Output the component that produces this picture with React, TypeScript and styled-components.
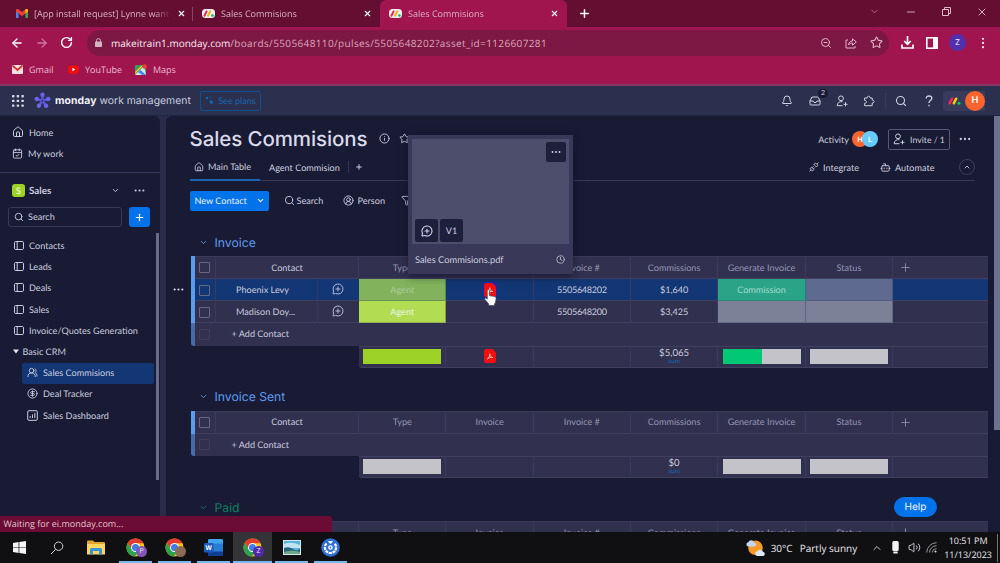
import React from 'react'
import styled, {createGlobalStyle, css} from 'styled-components'
import {
    ArrowLeft, ArrowRight, Bell, Bot, CalendarCheck, ChevronDown, ChevronUp, CircleDollarSign, CircleUserRound, Clock,
    Filter, House, Inbox, Info, MessageCirclePlus, Minus, Plus, RotateCw, Search, Star, Unplug, UsersRound, Volume2, X, ZoomOut,
} from 'lucide-react'

const theme = {
    page: '#191b34',
    gap: '#2b2c4a',
    topBar: '#2a304e',
    table: '#31304f',
    line: '#3f3f60',
    text: '#cacbde',
    muted: '#9495b3',
    blue: '#0073ea',
    group: '#5c9cf0',
    selected: '#133774',
    ui: '"Lato", "Liberation Sans", sans-serif',
    display: '"Inter", "Liberation Sans", sans-serif',
    chrome: '"Open Sans", "Liberation Sans", sans-serif',
}

/* ---------- icons ---------- */

const Dots = ({size = 12, vertical = false}: { size?: number, vertical?: boolean }) => (
    <svg width={size} height={size} viewBox="0 0 12 12" fill="currentColor">
        {[1.8, 6, 10.2].map(p => <circle key={p} cx={vertical ? 6 : p} cy={vertical ? p : 6} r="1.15"/>)}
    </svg>
)

const GmailIcon = () => (
    <svg width="12" height="9" viewBox="0 0 12 9">
        <path d="M0 1.5V9h2.6V3.4z" fill="#4285f4"/>
        <path d="M12 1.5V9H9.4V3.4z" fill="#34a853"/>
        <path d="M0 1.4C0 0 1.5-.4 2.6.5L6 3.1 9.4.5C10.5-.4 12 0 12 1.4V2.6L6 7 0 2.6z" fill="#ea4335"/>
        <path d="M9.4.5C10.5-.4 12 0 12 1.4V2.6L9.4 4.5z" fill="#fbbc04"/>
    </svg>
)

const MondayFavicon = () => (
    <svg width="13" height="9" viewBox="0 0 13 9">
        <rect width="13" height="9" rx="3.5" fill="#f6eef0"/>
        <path d="M2.4 6.7L4.6 2.4" stroke="#e2284f" strokeWidth="2" strokeLinecap="round"/>
        <path d="M6 6.7L8.2 2.4" stroke="#f5b800" strokeWidth="2" strokeLinecap="round"/>
        <circle cx="10.4" cy="6.5" r="1.3" fill="#00ba5f"/>
    </svg>
)

const MondayMark = () => (
    <svg width="13" height="8" viewBox="0 0 13 8" strokeWidth="2.5" strokeLinecap="round">
        <path d="M1.6 6.3L4 1.7" stroke="#fb275d"/>
        <path d="M5.8 6.3L8.2 1.7" stroke="#ffcc00"/>
        <circle cx="11" cy="6.2" r="1.5" fill="#00ca72"/>
    </svg>
)

const WorkLogo = () => (
    <svg width="17" height="17" viewBox="0 0 17 17">
        {[0, 72, 144, 216, 288].map(a => (
            <g key={a} transform={`rotate(${a} 8.5 8.8)`}>
                <path d="M8.5 8.8V3" stroke="#5b55d6" strokeWidth="2.4"/>
                <circle cx="8.5" cy="2.7" r="2.2" fill="#6a63f2"/>
            </g>
        ))}
        <circle cx="8.5" cy="8.8" r=".9" fill="#2a304e"/>
    </svg>
)

const AppGrid = () => (
    <svg width="12" height="12" viewBox="0 0 12 12" fill="#d8d9e8">
        {[0, 4.7, 9.4].map(y => [0, 4.7, 9.4].map(x => (
            <rect key={`${x}-${y}`} x={x} y={y} width="2.4" height="2.4" rx=".6"/>
        )))}
    </svg>
)

const BoardIcon = () => (
    <svg width="10" height="9" viewBox="0 0 10 9" fill="none" stroke="currentColor" strokeWidth="1">
        <rect x=".5" y=".5" width="9" height="8" rx="1.2"/>
        <path d="M3.2.5v8"/>
    </svg>
)

const DashboardIcon = () => (
    <svg width="11" height="11" viewBox="0 0 11 11" fill="none" stroke="currentColor" strokeWidth="1">
        <rect x=".7" y=".7" width="9.6" height="9.6" rx="1.2"/>
        <path d="M3.2 8V6M5.5 8V4.5M7.8 8V3"/>
    </svg>
)

const PersonAdd = ({size = 12}: { size?: number }) => (
    <svg width={size} height={size} viewBox="0 0 12 12" fill="none" stroke="currentColor" strokeWidth="1">
        <circle cx="5" cy="3.3" r="2.4"/>
        <path d="M6.5 6.7C3.5 6.2 1.2 7.6 1.2 10.7H6.5M9.5 7.3v4M7.5 9.3h4"/>
    </svg>
)

const PuzzleIcon = () => (
    <svg width="12" height="12" viewBox="0 0 12 12" fill="none" stroke="currentColor" strokeWidth="1" strokeLinejoin="round">
        <path d="M1.6 3H4.2C3.9.6 7.3.6 7 3H9.2V5C11.700 4.700 11.700 8.300 9.200 8V10.700H1.600V8.300C4 8.600 4 5.100 1.600 5.400z"/>
    </svg>
)

const PdfIcon = () => (
    <svg width="12" height="14" viewBox="0 0 12 14">
        <path d="M2 0H8.5L12 3.5V12a2 2 0 0 1-2 2H2a2 2 0 0 1-2-2V2a2 2 0 0 1 2-2z" fill="#f40f0f"/>
        <path d="M3.3 10C5 9 6 6.5 5.8 4.7C6 7.5 7.5 8.6 9 8.5C7 8.2 4.8 8.7 3.3 10z" fill="none" stroke="#ffd5d5" strokeWidth=".8"/>
    </svg>
)

const HandCursor = () => (
    <svg width="13" height="17" viewBox="0 0 13 17">
        <path d="M3.3 1.6c0-1.4 2-1.4 2 0v5l5.4 1c1 .3 1.5.9 1.4 1.9l-.7 4.2-.9 1.2V16.400H4.700v-1.500L1 10.600C.2 9.300 1.600 8.500 2.500 9.400l.8.8z" fill="#fff" stroke="#343444" strokeWidth=".6"/>
    </svg>
)

const ChromeIcon = () => (
    <svg width="19" height="19" viewBox="0 0 20 20">
        <circle cx="10" cy="10" r="9.5" fill="#fbc116"/>
        <path d="M1.8 5.2A9.5 9.5 0 0 1 18.3 5.5L10 5.5 6 12z" fill="#e53a2f"/>
        <path d="M1.8 5.2A9.5 9.5 0 0 0 9.5 19.5L14 12H6z" fill="#2ba24c"/>
        <circle cx="10" cy="10" r="4.7" fill="#fff"/>
        <circle cx="10" cy="10" r="3.7" fill="#3c7de6"/>
    </svg>
)

const WindowsIcon = () => (
    <svg width="13" height="13" viewBox="0 0 13 13" fill="#f4f4f4">
        <path d="M0 1.9L5.6 1.1V6.2H0zM6.3 1L13 0V6.2H6.3zM0 6.8H5.6V11.9L0 11.1zM6.3 6.8H13V13L6.3 12z"/>
    </svg>
)

const TaskSearchIcon = () => (
    <svg width="14" height="14" viewBox="0 0 14 14" fill="none" stroke="#d2d2d2" strokeWidth="1">
        <circle cx="8.6" cy="5.2" r="4.2"/>
        <path d="M5.6 8.3L1 13"/>
    </svg>
)

const FolderIcon = () => (
    <svg width="18" height="15" viewBox="0 0 18 15">
        <path d="M0 1.5Q0 .5 1 .5H6L7.5 2H17Q18 2 18 3V14H0z" fill="#dfa52c"/>
        <path d="M0 4H18V14.5H0z" fill="#fbd462"/>
        <path d="M3 14.5V9.5Q3 8 4.5 8H13.5Q15 8 15 9.5V14.5H12V11H6V14.5z" fill="#3a96d3"/>
    </svg>
)

const WordIcon = () => (
    <svg width="19" height="17" viewBox="0 0 19 17">
        <rect x="4" width="15" height="17" rx="1.5" fill="#2b7cd3"/>
        <path d="M4 1.5Q4 0 5.5 0H17.5Q19 0 19 1.5V4.5H4z" fill="#41a5ee"/>
        <path d="M4 12.5H19V15.5Q19 17 17.5 17H5.5Q4 17 4 15.5z" fill="#103f91"/>
        <rect y="4" width="9.5" height="9.5" rx="1" fill="#185abd"/>
        <text x="4.7" y="11.2" fontFamily="Open Sans" fontWeight="700" fontSize="6.5" fill="#fff" textAnchor="middle">W</text>
    </svg>
)

const PhotoIcon = () => (
    <svg width="18" height="15" viewBox="0 0 18 15">
        <rect width="18" height="15" fill="#d6e7ee"/>
        <rect x="1" y="1" width="16" height="13" fill="#57b3dc"/>
        <path d="M1 4Q8 1 17 5V8H1z" fill="#bfe3f2"/>
        <path d="M1 8Q6 6 10 9T17 8.5V14H1z" fill="#25647a"/>
        <path d="M1 12Q9 9 17 12V14H1z" fill="#6fa889"/>
    </svg>
)

const WheelIcon = () => (
    <svg width="19" height="19" viewBox="0 0 19 19">
        <circle cx="9.5" cy="9.5" r="9.3" fill="#2f6fdc"/>
        <path d="M5.500 5.500A5.600 5.600 0 1 0 13.500 5.500" fill="none" stroke="#fff" strokeWidth="2.200" strokeDasharray="3 .7"/>
        <path d="M6.800 3.500Q9.500 2.300 12.200 3.500L9.500 6z" fill="#fff"/>
        <circle cx="9.500" cy="9.500" r="2.300" fill="#fff"/>
        <circle cx="9.500" cy="9.500" r=".9" fill="#2f6fdc"/>
    </svg>
)

const WeatherIcon = () => (
    <svg width="20" height="18" viewBox="0 0 20 18">
        <circle cx="9.5" cy="8.8" r="7.3" fill="#f79a27"/>
        <path d="M2 7.5a2.2 2.2 0 0 1 .3-4.3A3 3 0 0 1 8 3.5a2 2 0 0 1 .2 4z" fill="#c3d6f3"/>
        <path d="M11 17a2.4 2.4 0 0 1 .2-4.7A3.2 3.2 0 0 1 17 12.7a2.2 2.2 0 0 1 .2 4.3z" fill="#dce8fa"/>
    </svg>
)

/* ---------- browser ---------- */

const openTabs = [
    {title: '[App install request] Lynne want', width: 193, mail: true},
    {title: 'Sales Commisions', width: 187},
    {title: 'Sales Commisions', width: 187, active: true},
]

const Browser = () => (
    <>
        <TabStrip>
            {openTabs.map((tab, i) => (
                <Tab key={i} $width={tab.width} $active={tab.active} $divided={i === 0}>
                    {tab.mail ? <GmailIcon/> : <MondayFavicon/>}
                    <TabTitle>{tab.title}</TabTitle>
                    <X size={9} strokeWidth={3}/>
                </Tab>
            ))}
            <NewTab><Plus size={13} strokeWidth={2.8}/></NewTab>
            <WindowButtons>
                <ChevronDown size={11} strokeWidth={1.6} color="#b98a9d"/>
                <Minus size={12} strokeWidth={1.8}/>
                <svg width="9" height="9" viewBox="0 0 9 9" fill="none" stroke="currentColor">
                    <path d="M.5 2.5h6v6h-6zM2.5 2.5v-2h6v6h-2"/>
                </svg>
                <X size={12} strokeWidth={1.9}/>
            </WindowButtons>
        </TabStrip>
        <AddressRow>
            <NavButtons>
                <ArrowLeft size={14} strokeWidth={2.3}/>
                <ArrowRight size={14} strokeWidth={2.2} color="#cb7c9c"/>
                <RotateCw size={13} strokeWidth={2.6}/>
            </NavButtons>
            <AddressBar>
                <svg width="7" height="9" viewBox="0 0 7 9">
                    <rect y="3.5" width="7" height="5.5" rx=".8" fill="#d0b4c1"/>
                    <path d="M1.5 4V2.6a2 2 0 0 1 4 0V4" fill="none" stroke="#d0b4c1"/>
                </svg>
                <Url><b>makeitrain1.monday.com</b>/boards/5505648110/pulses/5505648202?asset_id=1126607281</Url>
                <AddressActions>
                    <ZoomOut size={12} strokeWidth={2}/>
                    <svg width="12" height="12" viewBox="0 0 12 12" fill="none" stroke="currentColor">
                        <path d="M3 3H1v8h9V9M3.5 8C3.7 5.5 5.3 4 7.5 4V1.8L11.3 5 7.5 8.2V6C5.8 6 4.5 6.6 3.5 8z"/>
                    </svg>
                    <Star size={13} strokeWidth={2}/>
                </AddressActions>
            </AddressBar>
            <Extensions>
                <svg width="13" height="13" viewBox="0 0 13 13" fill="none" stroke="#fff" strokeWidth="1.7">
                    <path d="M6.5 0V8M3.2 5L6.5 8.3 9.8 5M1 8.5V12H12V8.5"/>
                </svg>
                <svg width="12" height="12" viewBox="0 0 12 12">
                    <rect x=".8" y=".8" width="10.4" height="10.4" fill="none" stroke="#fff" strokeWidth="1.6"/>
                    <path d="M7 0h5v12H7z" fill="#fff"/>
                </svg>
                <Profile>Z</Profile>
                <Dots size={12} vertical/>
            </Extensions>
        </AddressRow>
        <Bookmarks>
            <Bookmark $width={56}>
                <svg width="11" height="9" viewBox="0 0 11 9">
                    <rect width="11" height="9" rx="1" fill="#f3dfe0"/>
                    <path d="M.5.5L5.5 5 10.5.5" fill="none" stroke="#d93025" strokeWidth="1.7"/>
                </svg>
                Gmail
            </Bookmark>
            <Bookmark $width={67}>
                <svg width="11" height="9" viewBox="0 0 12 9">
                    <rect width="12" height="9" rx="2.5" fill="#f20d0d"/>
                    <path d="M4.8 2.7V6.3L8 4.5z" fill="#fff"/>
                </svg>
                YouTube
            </Bookmark>
            <Bookmark $width={60}>
                <svg width="12" height="11" viewBox="0 0 12 11">
                    <rect y="1" width="11" height="10" rx="1" fill="#34a05b"/>
                    <path d="M0 11L9 2 11 11z" fill="#dfe6ec"/>
                    <path d="M5.5 6L11 11H7L3 8z" fill="#4285f4"/>
                    <path d="M0 9L7 2" stroke="#f7c52b" strokeWidth="1.3"/>
                    <circle cx="9.5" cy="2.5" r="2.3" fill="#ea4335"/>
                </svg>
                Maps
            </Bookmark>
        </Bookmarks>
    </>
)

/* ---------- monday shell ---------- */

const ProductBar = () => (
    <TopBar>
        <AppGrid/>
        <Brand>
            <WorkLogo/>
            <BrandName><b>monday</b> work management</BrandName>
        </Brand>
        <SeePlans>
            <svg width="9" height="9" viewBox="0 0 9 9" fill="currentColor">
                <circle cx="2" cy="2" r="1.3"/>
                <circle cx="6.3" cy="6" r="1.8"/>
                <circle cx="5.5" cy="1.5" r=".7"/>
            </svg>
            See plans
        </SeePlans>
        <TopActions>
            <TopIcon $width={28}><Bell size={12} strokeWidth={2}/></TopIcon>
            <TopIcon $width={27}>
                <Inbox size={12} strokeWidth={2}/>
                <Counter>2</Counter>
            </TopIcon>
            <TopIcon $width={27}><PersonAdd/></TopIcon>
            <TopIcon $width={28}><PuzzleIcon/></TopIcon>
            <TopDivider/>
            <TopIcon $width={28}><Search size={12} strokeWidth={2.2}/></TopIcon>
            <TopIcon $width={27}>
                <svg width="8" height="12" viewBox="0 0 8 12" fill="none" stroke="currentColor" strokeWidth="1.3">
                    <path d="M1.2 3.4C1.2.2 6.8.2 6.8 3.4 6.8 5.3 4 5.5 4 8M4 9.8v1.4"/>
                </svg>
            </TopIcon>
            <AccountChip>
                <MondayMark/>
                <Avatar $size={20} $color="#ff642e">H</Avatar>
            </AccountChip>
        </TopActions>
    </TopBar>
)

const boards = ['Contacts', 'Leads', 'Deals', 'Sales', 'Invoice/Quotes Generation']

const Sidebar = () => (
    <SidePanel>
        <SideTop>
            <SideLink><House size={12} strokeWidth={2}/>Home</SideLink>
            <SideLink><CalendarCheck size={11} strokeWidth={2}/>My work</SideLink>
        </SideTop>
        <Workspace>
            <WorkspaceBadge>S</WorkspaceBadge>
            <WorkspaceName>Sales</WorkspaceName>
            <ChevronDown size={9} strokeWidth={2.4}/>
            <Dots size={11}/>
        </Workspace>
        <SideSearchRow>
            <SideSearch><Search size={10} strokeWidth={2.2}/>Search</SideSearch>
            <AddButton><Plus size={11} strokeWidth={2.6}/></AddButton>
        </SideSearchRow>
        {boards.map(name => <BoardLink key={name}><BoardIcon/>{name}</BoardLink>)}
        <FolderLink>
            <svg width="6" height="5" viewBox="0 0 6 5"><path d="M0 .5h6L3 4.5z" fill="#e4e4f0"/></svg>
            Basic CRM
        </FolderLink>
        <SubLink $active><UsersRound size={11} strokeWidth={2}/>Sales Commisions</SubLink>
        <SubLink><CircleDollarSign size={11} strokeWidth={2}/>Deal Tracker</SubLink>
        <SubLink><DashboardIcon/>Sales Dashboard</SubLink>
        <SideScroll/>
    </SidePanel>
)

/* ---------- board ---------- */

const columnTitles = ['Type', 'Invoice', 'Invoice #', 'Commissions', 'Generate Invoice', 'Status']

type Item = { name: string, number: string, amount: string, stage?: string, hovered?: boolean }

const items: Item[] = [
    {name: 'Phoenix Levy', number: '5505648202', amount: '$1,640', stage: 'Commission', hovered: true},
    {name: 'Madison Doy...', number: '5505648200', amount: '$3,425'},
]

// the open file preview takes the place of one column title
const HeaderRow = ({covered}: { covered?: string }) => (
    <Row $height={23} $first>
        <Handle/>
        <CheckCell><Checkbox/></CheckCell>
        <ContactHead>Contact</ContactHead>
        {columnTitles.map(title => <HeadCell key={title}>{title !== covered && title}</HeadCell>)}
        <LastCell><Plus size={13} strokeWidth={1.5}/></LastCell>
    </Row>
)

const ItemRow = ({name, number, amount, stage, hovered}: Item) => (
    <Row $height={22} $selected={hovered}>
        <Handle/>
        {hovered && <RowMenu><Dots size={11}/></RowMenu>}
        <CheckCell><Checkbox/></CheckCell>
        <ContactCell>
            <ContactName>{name}</ContactName>
            <CommentCell><MessageCirclePlus size={12} strokeWidth={2}/></CommentCell>
        </ContactCell>
        <Label $color={hovered ? '#82b35c' : '#b2dc52'} $ink={hovered ? '#a9cb97' : '#e9f3e4'}>Agent</Label>
        <Cell>{hovered && <PdfSlot><PdfIcon/></PdfSlot>}</Cell>
        <Cell $digits>{number}</Cell>
        <Cell>{amount}</Cell>
        <Label $color={stage ? '#2aa487' : '#7c8198'} $ink="#a3d9cb">{stage}</Label>
        <Label $color={hovered ? '#5e6a8f' : '#7c8198'}/>
        <LastCell/>
    </Row>
)

const AddRow = () => (
    <Row $height={22.5} $end>
        <Handle $dim/>
        <CheckCell $plain><Checkbox $dim/></CheckCell>
        <AddText>+ Add Contact</AddText>
    </Row>
)

type SummaryProps = { total: string, type: string, done?: number, withFile?: boolean }

const Summary = ({total, type, done = 0, withFile}: SummaryProps) => (
    <SummaryRow>
        <Cell><Bar $color={type}/></Cell>
        <Cell>{withFile && <PdfIcon/>}</Cell>
        <Cell/>
        <Cell><Total>{total}<small>sum</small></Total></Cell>
        <Cell><Bar $color="#c3c3c9"><Progress style={{width: `${done}%`}}/></Bar></Cell>
        <Cell><Bar $color="#c3c3c9"/></Cell>
        <LastCell/>
    </SummaryRow>
)

const FilePreview = () => (
    <Preview>
        <PreviewImage>
            <PreviewButton $size={20} $end><Dots size={10}/></PreviewButton>
            <PreviewTools>
                <PreviewButton $size={23}><MessageCirclePlus size={12} strokeWidth={2.2}/></PreviewButton>
                <PreviewButton $size={23}>V1</PreviewButton>
            </PreviewTools>
        </PreviewImage>
        <PreviewFooter>Sales Commisions.pdf<Clock size={9} strokeWidth={2}/></PreviewFooter>
    </Preview>
)

const Board = () => (
    <Main>
        <TitleRow>
            <Title>Sales Commisions</Title>
            <Info size={11} strokeWidth={2}/>
            <Star size={11} strokeWidth={2}/>
            <TitleActions>
                Activity
                <Avatars>
                    <Avatar $size={16} $color="#ff642e">H</Avatar>
                    <Avatar $size={16} $color="#66ccff">L</Avatar>
                </Avatars>
                <InviteButton><PersonAdd/>Invite / 1</InviteButton>
                <Dots size={12}/>
            </TitleActions>
        </TitleRow>
        <Views>
            <View $active><House size={10} strokeWidth={2}/>Main Table</View>
            <View>Agent Commision</View>
            <View $last><Plus size={8} strokeWidth={3}/></View>
            <ViewActions>
                <ViewAction $width={71}><Unplug size={10} strokeWidth={2}/>Integrate</ViewAction>
                <ViewAction $width={79}>
                    <Bot size={11} strokeWidth={2}/>
                    Automate
                </ViewAction>
                <Collapse><ChevronUp size={8} strokeWidth={2.6}/></Collapse>
            </ViewActions>
        </Views>
        <Toolbar>
            <NewButton>
                <span>New Contact</span>
                <ChevronDown size={9} strokeWidth={3}/>
            </NewButton>
            <Tool $width={59}><Search size={11} strokeWidth={2}/>Search</Tool>
            <Tool $width={58}><CircleUserRound size={11} strokeWidth={2}/>Person</Tool>
            <Tool $width={40}><Filter size={11} strokeWidth={2}/></Tool>
        </Toolbar>

        <GroupTitle $top={26}><ChevronDown size={9} strokeWidth={2.4}/>Invoice</GroupTitle>
        <Table>
            <HeaderRow covered="Invoice"/>
            {items.map(item => <ItemRow key={item.name} {...item}/>)}
            <AddRow/>
        </Table>
        <Summary total="$5,065" type="#9cd326" done={50} withFile/>

        <GroupTitle $top={23}><ChevronDown size={9} strokeWidth={2.4}/>Invoice Sent</GroupTitle>
        <Table>
            <HeaderRow/>
            <AddRow/>
        </Table>
        <Summary total="$0" type="#c3c3c9"/>

        <GroupTitle $top={23} $color="#0b7f5e"><ChevronDown size={9} strokeWidth={2.4}/>Paid</GroupTitle>
        <Table><HeaderRow/></Table>

        <FilePreview/>
        <Pointer><HandCursor/></Pointer>
        <MainScroll/>
        <HelpButton>Help</HelpButton>
    </Main>
)

const Taskbar = () => (
    <Tasks>
        <Task $width={38}><WindowsIcon/></Task>
        <Task $width={37}><TaskSearchIcon/></Task>
        <Task $width={41}><FolderIcon/></Task>
        <Task $width={39} $running><ChromeIcon/><TaskBadge $color="#8156b8">P</TaskBadge></Task>
        <Task $width={39} $running><ChromeIcon/><TaskBadge $color="#8b6a55"/></Task>
        <Task $width={39} $running><WordIcon/></Task>
        <Task $width={39} $running $active><ChromeIcon/><TaskBadge $color="#5228a8">Z</TaskBadge></Task>
        <Task $width={39} $running><PhotoIcon/></Task>
        <Task $width={39} $running><WheelIcon/></Task>
        <Tray>
            <WeatherIcon/>
            <Weather><span>30°C</span><span>Partly sunny</span></Weather>
            <ChevronUp size={12} strokeWidth={1.7}/>
            <svg width="7" height="13" viewBox="0 0 7 13" fill="#f2f2f2">
                <rect x=".3" width="6.4" height="10" rx="1.5"/>
                <rect x="1.3" y="10.5" width="4.4" height="2" rx=".5"/>
            </svg>
            <Volume2 size={13} strokeWidth={1.6}/>
            <Network>
                <svg width="11" height="11" viewBox="0 0 11 11" fill="none" stroke="#a5a5a5" strokeWidth=".9">
                    <path d="M.7 10.5A10 10 0 0 1 10.5.7M3.5 10.5A7 7 0 0 1 10.5 3.7M6.2 10.5A4.5 4.5 0 0 1 10.5 6.5"/>
                    <circle cx="9.5" cy="9.5" r="1" fill="#e0e0e0" stroke="none"/>
                </svg>
            </Network>
            <ClockText><span>10:51 PM</span><span>11/13/2023</span></ClockText>
        </Tray>
    </Tasks>
)

const App = () => (
    <Screen>
        <GlobalStyle/>
        <Browser/>
        <ProductBar/>
        <Body>
            <Sidebar/>
            <Board/>
            <StatusBubble>Waiting for ei.monday.com...</StatusBubble>
        </Body>
        <Taskbar/>
    </Screen>
)

export default App

/* ---------- styles ---------- */

const GlobalStyle = createGlobalStyle`
  * {
    box-sizing: border-box;
  }

  body {
    margin: 0;
    overflow: hidden;
    text-rendering: geometricPrecision;
  }

  svg {
    flex-shrink: 0;
    display: block;
  }
`

const center = css`
  display: flex;
  align-items: center;
  justify-content: center;
`

const Screen = styled.div`
  width: 1000px;
  height: 563px;
  display: flex;
  flex-direction: column;
  overflow: hidden;
  background: ${theme.gap};
  color: ${theme.text};
  font: 9.1px ${theme.ui};
  white-space: nowrap;
`

const TabStrip = styled.div`
  height: 27px;
  flex-shrink: 0;
  display: flex;
  background: #640e31;
  color: #f3dde6;
  font: 9px ${theme.chrome};
`

const Tab = styled.div<{ $width: number, $active?: boolean, $divided?: boolean }>`
  width: ${({$width}) => $width}px;
  display: flex;
  align-items: center;
  gap: 6px;
  padding: 0 8px 0 9px;
  color: #d8b3c2;

  &:first-child {
    padding: 0 7px 0 16px;
  }

  ${({$divided}) => $divided && css`
    background: linear-gradient(#8d4260, #8d4260) right 7px / 1px 14px no-repeat;
  `}
  ${({$active}) => $active && css`
    background: #a1154f;
    border-radius: 6px 6px 0 0;
  `}
  > svg:last-child {
    color: #fff;
  }
`

const TabTitle = styled.span`
  flex: 1;
  min-width: 0;
  overflow: hidden;
  mask-image: linear-gradient(90deg, #000 88%, transparent);
`

const NewTab = styled.div`
  ${center};
  width: 34px;
  color: #fff;
`

const WindowButtons = styled.div`
  margin-left: auto;
  padding: 0 12px 4px 0;
  display: flex;
  align-items: center;
  gap: 25px;
  color: #d9bac6;
`

const AddressRow = styled.div`
  height: 31px;
  flex-shrink: 0;
  display: flex;
  align-items: center;
  background: #a1154f;
`

const NavButtons = styled.div`
  display: flex;
  align-items: center;
  gap: 11px;
  width: 87px;
  padding-left: 10px;
  color: #fff;
`

const AddressBar = styled.div`
  width: 802px;
  height: 26px;
  border-radius: 13px;
  padding: 0 6px 0 8px;
  display: flex;
  align-items: center;
  background: #7c1843;
`

const Url = styled.span`
  margin-left: 9px;
  font: 10px ${theme.chrome};
  letter-spacing: .37px;
  color: #dba6bb;

  b {
    font-weight: 400;
    letter-spacing: 0;
    color: #fbeaf1;
  }
`

const AddressActions = styled.div`
  margin-left: auto;
  display: flex;
  align-items: center;
  gap: 13px;
  color: #e0b4c6;
`

const Extensions = styled.div`
  display: flex;
  align-items: center;
  gap: 11.5px;
  padding-left: 12px;
  color: #f3dfe7;
`

const Profile = styled.div`
  ${center};
  width: 17px;
  height: 17px;
  margin-right: -1px;
  border-radius: 50%;
  background: #5130ae;
  font: 8px ${theme.chrome};
  color: #fff;
`

const Bookmarks = styled.div`
  height: 28px;
  flex-shrink: 0;
  display: flex;
  align-items: center;
  padding: 0 0 3px 12px;
  background: #a1154f;
  border-bottom: 2px solid #863560;
`

const Bookmark = styled.div<{ $width: number }>`
  width: ${({$width}) => $width}px;
  display: flex;
  align-items: center;
  gap: 6px;
  font: 9px ${theme.chrome};
  color: #e6bfce;
`

const TopBar = styled.div`
  height: 30px;
  flex-shrink: 0;
  display: flex;
  align-items: center;
  padding-left: 12px;
  background: ${theme.topBar};
  border-bottom: 1px solid #202440;
`

const Brand = styled.div`
  display: flex;
  align-items: center;
  gap: 4px;
  width: 165px;
  margin-left: 10px;
  margin-right: 1px;
`

const BrandName = styled.span`
  font: 10.4px ${theme.display};
  color: #c9cbdf;

  b {
    letter-spacing: .1px;
    color: #f1f1f8;
  }
`

const SeePlans = styled.div`
  ${center};
  gap: 4px;
  width: 61px;
  height: 20px;
  border: 1px solid #11508f;
  border-radius: 2px;
  color: #1566b3;
`

const TopActions = styled.div`
  display: flex;
  align-items: center;
  margin-left: auto;
  padding-right: 15px;
  color: #d0d1e1;
`

const TopIcon = styled.div<{ $width: number }>`
  ${center};
  position: relative;
  width: ${({$width}) => $width}px;
`

const Counter = styled.span`
  ${center};
  position: absolute;
  top: -6px;
  right: 0;
  width: 10px;
  height: 9px;
  border-radius: 5px;
  background: #181b34;
  font-size: 7px;
`

const TopDivider = styled.div`
  width: 1px;
  height: 16px;
  margin: 0 1px 0 2px;
  background: #373c5d;
`

const AccountChip = styled.div`
  display: flex;
  align-items: center;
  gap: 4px;
  height: 20px;
  margin-left: 1px;
  padding-left: 5px;
  border-radius: 4px 0 0 4px;
  background: #383b5c;
`

const Avatar = styled.div<{ $size: number, $color: string }>`
  ${center};
  width: ${({$size}) => $size}px;
  height: ${({$size}) => $size}px;
  border-radius: 50%;
  background: ${({$color}) => $color};
  color: #fff;
  font: 600 ${({$size}) => $size * .46}px ${theme.display};
`

const Body = styled.div`
  position: relative;
  flex: 1;
  min-height: 0;
  display: flex;
  gap: 6px;
  overflow: hidden;
`

const SidePanel = styled.div`
  position: relative;
  width: 160px;
  flex-shrink: 0;
  border-radius: 0 6px 0 0;
  background: ${theme.page};
`

const SideTop = styled.div`
  height: 57px;
  padding-top: 5px;
  border-bottom: 1px solid #35375a;
`

const SideLink = styled.div`
  height: 22px;
  display: flex;
  align-items: center;
  gap: 5px;
  padding-left: 12px;
  letter-spacing: .05px;

  & + & {
    height: 21px;
  }
`

const Workspace = styled.div`
  height: 34px;
  display: flex;
  align-items: center;
  padding: 1px 15px 0 12px;

  > svg + svg {
    margin-left: 14px;
  }
`

const WorkspaceBadge = styled.div`
  ${center};
  width: 13px;
  height: 13px;
  border-radius: 3px;
  background: #9cd326;
  color: #fff;
  font-size: 9px;
`

const WorkspaceName = styled.span`
  flex: 1;
  margin-left: 4px;
  font-size: 9.8px;
  font-weight: 700;
`

const SideSearchRow = styled.div`
  display: flex;
  justify-content: space-between;
  padding: 0 10px 0 8px;
  margin-bottom: 8.5px;
`

const SideSearch = styled.div`
  display: flex;
  align-items: center;
  gap: 4px;
  width: 114px;
  height: 20px;
  padding: 0 0 1px 5px;
  border: 1px solid #373959;
  border-radius: 3px;
`

const AddButton = styled.div`
  ${center};
  width: 21px;
  height: 20px;
  border-radius: 3px;
  background: ${theme.blue};
  color: #fff;
`

const BoardLink = styled.div`
  height: 21.2px;
  display: flex;
  align-items: center;
  gap: 5px;
  padding: 0 0 1px 14px;
`

const FolderLink = styled(BoardLink)`
  gap: 4px;
  padding-left: 12.5px;
`

const SubLink = styled(BoardLink)<{ $active?: boolean }>`
  width: 132px;
  margin-left: 22px;
  padding-left: 5px;
  border-radius: 2px;
  background: ${({$active}) => $active ? theme.selected : 'none'};
`

const SideScroll = styled.div`
  position: absolute;
  top: 117px;
  right: 1px;
  width: 3px;
  height: 247px;
  background: #6a6b87;
`

const Main = styled.div`
  position: relative;
  flex: 1;
  min-width: 0;
  border-radius: 6px 0 0 0;
  background: ${theme.page};
`

const TitleRow = styled.div`
  height: 45px;
  display: flex;
  align-items: center;
  gap: 9px;
  padding: 0 29px 0 23.5px;
`

const Title = styled.h1`
  width: 180px;
  margin: 0;
  font: 500 20.5px ${theme.display};
  letter-spacing: -.1px;
  color: #d9daea;
`

const TitleActions = styled.div`
  display: flex;
  align-items: center;
  margin-left: auto;
  padding-top: 1px;

  > svg {
    margin-left: 9px;
  }
`

const Avatars = styled.div`
  display: flex;
  margin: 0 10px 0 3px;

  > div + div {
    margin-left: -6px;
  }
`

const InviteButton = styled.div`
  ${center};
  gap: 5px;
  width: 62px;
  height: 21px;
  border: 1px solid #565878;
  border-radius: 2px;
  font-size: 8.7px;
`

const Views = styled.div`
  height: 20px;
  display: flex;
  align-items: flex-start;
  margin: 0 25px 0 24px;
  border-bottom: 1px solid #373959;
`

const View = styled.div<{ $active?: boolean, $last?: boolean }>`
  height: ${({$active}) => $active ? 20 : 12}px;
  display: flex;
  align-items: center;
  gap: 4px;
  padding: 0 8px 0 9px;
  border-right: ${({$active, $last}) => $active || $last ? 0 : '1px solid #32345a'};

  ${({$last}) => $last && css`
    padding-left: 6px;
  `}
  ${({$active}) => $active && css`
    width: 70px;
    padding: 0 0 7px 4px;
    border-bottom: 2px solid #1b61b4;
  `}
`

const ViewActions = styled.div`
  display: flex;
  align-items: center;
  height: 12px;
  margin-left: auto;
`

const ViewAction = styled.div<{ $width: number }>`
  width: ${({$width}) => $width}px;
  display: flex;
  align-items: center;
  gap: 4px;
`

const Collapse = styled.div`
  ${center};
  width: 16px;
  height: 16px;
  border: 1px solid #3b3d5e;
  border-radius: 50%;
`

const Toolbar = styled.div`
  display: flex;
  align-items: center;
  gap: 15px;
  margin: 9.5px 0 0 23.5px;
`

const NewButton = styled.div`
  display: flex;
  align-items: center;
  justify-content: space-between;
  width: 79px;
  height: 20px;
  padding: 0 4px 1px 5px;
  border-radius: 2px;
  background: ${theme.blue};
  color: #e9f1fd;
`

const Tool = styled.div<{ $width: number }>`
  width: ${({$width}) => $width - 15}px;
  display: flex;
  align-items: center;
  gap: 2px;
  padding-bottom: 1px;

  & + & {
    gap: 4px;
  }
`

const GroupTitle = styled.div<{ $top: number, $color?: string }>`
  display: flex;
  align-items: center;
  gap: 7px;
  height: 12px;
  margin: ${({$top}) => $top}px 0 8px 32.5px;
  font: 12.2px ${theme.display};
  color: ${({$color}) => $color || theme.group};

  ${() => Toolbar} + & {
    margin-bottom: 7.5px;
  }
`

const Table = styled.div`
  width: 797px;
  margin-left: 25px;
`

const Row = styled.div<{ $height: number, $selected?: boolean, $first?: boolean, $end?: boolean }>`
  position: relative;
  display: flex;
  height: ${({$height}) => $height}px;
  background: ${({$selected}) => $selected ? theme.selected : theme.table};
  border-radius: ${({$end}) => $end ? '0 0 0 3px' : 0};
  box-shadow: inset 0 -1px ${({$end}) => $end ? 'transparent' : theme.line};

  ${({$first}) => $first && css`
    border-radius: 3px 0 0 0;
    box-shadow: inset 0 1px #3a3a5b, inset 0 -1px ${theme.line};
  `}
`

const Handle = styled.div<{ $dim?: boolean }>`
  width: 4px;
  flex-shrink: 0;
  border-radius: ${({$dim}) => $dim ? '0 0 0 3px' : 0};
  background: ${({$dim}) => $dim ? '#466ba8' : theme.group};
`

const RowMenu = styled.div`
  position: absolute;
  left: -18px;
  top: 5px;
  color: #e5e5f0;
`

const CheckCell = styled.div<{ $plain?: boolean }>`
  display: flex;
  align-items: center;
  width: 21px;
  flex-shrink: 0;
  padding-left: 4px;
  border-right: 1px solid ${({$plain}) => $plain ? 'transparent' : '#3a3a5c'};
`

const Checkbox = styled.div<{ $dim?: boolean }>`
  width: 11px;
  height: 11px;
  border: 1px solid ${({$dim}) => $dim ? '#3d3d5d' : '#666884'};
  border-radius: 1px;
`

const Cell = styled.div<{ $digits?: boolean }>`
  ${center};
  width: 87.45px;
  flex-shrink: 0;
  padding-bottom: 1px;
  border-right: 1px solid #3a3a5c;
  letter-spacing: ${({$digits}) => $digits ? '-.32px' : 0};

  &:nth-last-child(5) {
    width: 97px;
  }
`

const HeadCell = styled(Cell)`
  color: ${theme.muted};
`

const ContactHead = styled.div`
  ${center};
  width: 143px;
  flex-shrink: 0;
  padding-bottom: 1px;
  border-right: 1px solid #3a3a5c;
`

const ContactCell = styled.div`
  display: flex;
  width: 143px;
  flex-shrink: 0;
`

const ContactName = styled.div`
  display: flex;
  align-items: center;
  width: 102px;
  padding: 0 0 1px 20px;
  border-right: 1px solid #37375a;
`

const CommentCell = styled.div`
  ${center};
  width: 39px;
  padding-bottom: 2px;
  color: #b4b9d6;
`

const Label = styled(Cell)<{ $color: string, $ink?: string }>`
  background: ${({$color}) => $color};
  border-right-color: rgba(49, 48, 79, .35);
  border-bottom: 1px solid rgba(49, 48, 79, .25);
  color: ${({$ink}) => $ink};
`

const LastCell = styled.div`
  flex: 1;
  display: flex;
  align-items: center;
  padding-left: 6px;
  color: ${theme.muted};
`

const PdfSlot = styled.div`
  padding: 1px;
  border-radius: 4px;
  background: #1724c4;
`

const AddText = styled.div`
  display: flex;
  align-items: center;
  padding: 0 0 1px 15.5px;
`

const SummaryRow = styled.div`
  display: flex;
  width: 629px;
  height: 22px;
  margin-left: 193px;
  border-radius: 0 0 0 3px;
  background: ${theme.table};
  box-shadow: inset 0 1px ${theme.line}, inset 0 -1px ${theme.line};
`

const Bar = styled.div<{ $color: string }>`
  width: 78px;
  height: 15px;
  background: ${({$color}) => $color};
`

const Progress = styled.div`
  height: 100%;
  background: #00c875;
`

const Total = styled.div`
  display: flex;
  flex-direction: column;
  align-items: center;
  padding-top: 1px;
  font-size: 9.6px;
  line-height: 9px;

  small {
    font-size: 6.5px;
    line-height: 7px;
    color: #1766b8;
  }
`

const Preview = styled.div`
  position: absolute;
  left: 242px;
  top: 19px;
  width: 165px;
  height: 139px;
  padding: 4px;
  background: #393858;
  box-shadow: 0 3px 8px rgba(12, 13, 34, .55);
`

const PreviewImage = styled.div`
  display: flex;
  flex-direction: column;
  justify-content: space-between;
  height: 105px;
  padding: 3px 3px 2px;
  background: #4d4d6c;
`

const PreviewTools = styled.div`
  display: flex;
  gap: 2px;
`

const PreviewButton = styled.div<{ $size: number, $end?: boolean }>`
  ${center};
  width: ${({$size}) => $size}px;
  height: ${({$size}) => $size}px;
  align-self: ${({$end}) => $end ? 'flex-end' : 'auto'};
  border-radius: 2px;
  background: #1e1f3a;
  color: #d3d4e6;
`

const PreviewFooter = styled.div`
  display: flex;
  align-items: center;
  justify-content: space-between;
  height: 30px;
  padding: 0 4px 0 3px;
  font-size: 9.3px;
`

const Pointer = styled.div`
  position: absolute;
  left: 318px;
  top: 173px;
`

const MainScroll = styled.div`
  position: absolute;
  top: 0;
  right: 0;
  width: 6px;
  height: 314px;
  background: #6d708f;
`

const HelpButton = styled.div`
  ${center};
  position: absolute;
  left: 728px;
  top: 381px;
  width: 43px;
  height: 20px;
  border-radius: 10px;
  background: ${theme.blue};
  color: #f1f6fe;
  font: 10px ${theme.display};
`

const StatusBubble = styled.div`
  position: absolute;
  left: 0;
  bottom: 0;
  width: 332px;
  height: 16px;
  padding-left: 3.5px;
  border-radius: 0 3px 0 0;
  background: #6a0c33;
  color: #e3c3cf;
  font: 9px/15px ${theme.chrome};
`

const Tasks = styled.div`
  height: 31px;
  flex-shrink: 0;
  display: flex;
  background: #101013;
  color: #e9e9ec;
  font-family: ${theme.chrome};
`

const Task = styled.div<{ $width: number, $running?: boolean, $active?: boolean }>`
  ${center};
  position: relative;
  width: ${({$width}) => $width}px;
  background: ${({$active}) => $active ? '#343438' : 'none'};

  ${({$running, $active}) => $running && css`
    &::after {
      content: '';
      position: absolute;
      bottom: 0;
      left: ${$active ? 0 : 3}px;
      right: ${$active ? 0 : 3}px;
      height: 2px;
      background: #76b9ed;
    }
  `}
`

const TaskBadge = styled.span<{ $color: string }>`
  ${center};
  position: absolute;
  left: 20px;
  top: 14px;
  width: 11px;
  height: 11px;
  border-radius: 50%;
  background: ${({$color}) => $color};
  font-size: 7px;
`

const Tray = styled.div`
  display: flex;
  align-items: center;
  gap: 9px;
  margin-left: auto;
  padding-right: 2px;
`

const Weather = styled.div`
  display: flex;
  gap: 7px;
  margin: 0 5px 0 -4px;
  font-size: 10px;
`

const Network = styled.div`
  margin: 0 -2px 0 -4px;
`

const ClockText = styled.div`
  display: flex;
  flex-direction: column;
  align-items: center;
  padding-right: 5px;
  border-right: 1px solid #737378;
  font-size: 9px;
  line-height: 14px;
`
